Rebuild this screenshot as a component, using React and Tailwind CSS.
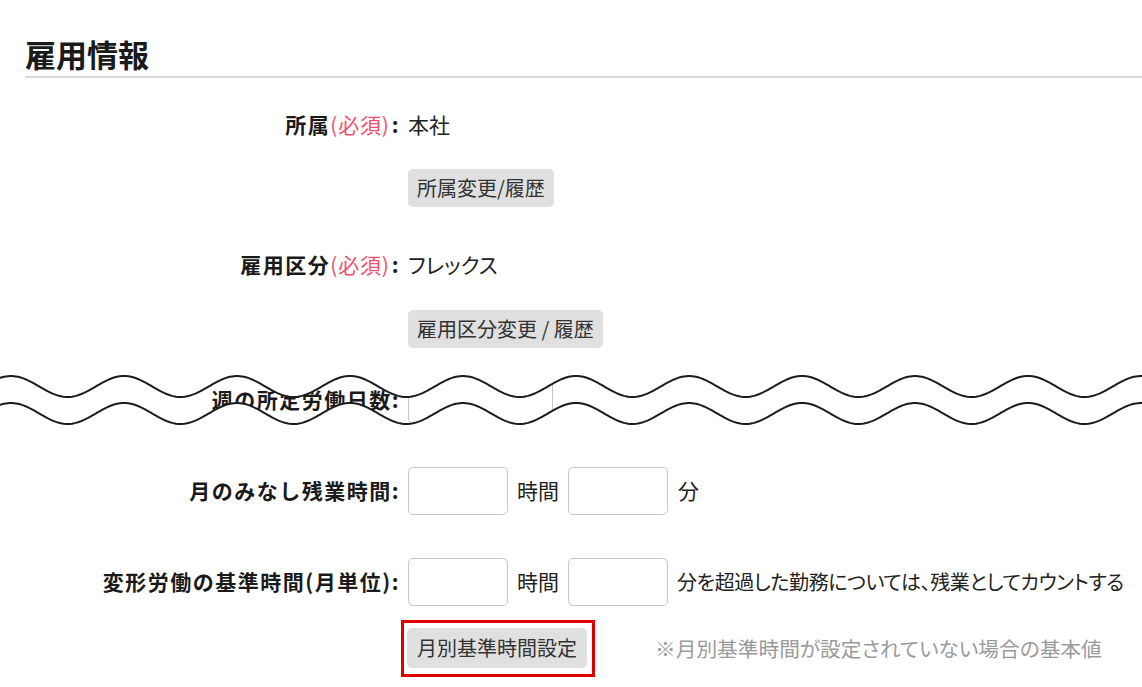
import React from 'react'

function wavePath(mid, amp, period, phase, width) {
    let d = ''
    for (let x = -2; x <= width + 2; x += 2) {
        const y = mid - amp * Math.cos((2 * Math.PI * (x - phase)) / period)
        d += (x === -2 ? 'M' : 'L') + x + ' ' + y.toFixed(2) + ' '
    }
    return d
}

function CutMark() {
    const w = 1142
    const h = 74
    const top = wavePath(24.5, 10.5, 113, 11, w)
    const bottom = wavePath(51.5, 10.5, 113, 11, w)
    return (
        <svg className="absolute left-0 top-[-13px] pointer-events-none" width={w} height={h} viewBox={`0 0 ${w} ${h}`}>
            <path d={`${top} L${w + 2} 0 L-2 0 Z`} fill="#fff" />
            <path d={`${bottom} L${w + 2} ${h} L-2 ${h} Z`} fill="#fff" />
            <path d={top} fill="none" stroke="#1c1c1c" strokeWidth="2" />
            <path d={bottom} fill="none" stroke="#1c1c1c" strokeWidth="2" />
        </svg>
    )
}

function Row({ label, required, className = '', children }) {
    return (
        <div className={`flex items-center ${className}`}>
            <div className="w-[400px] shrink-0 text-right text-[21px] font-bold text-[#1a1a1a] whitespace-nowrap tracking-[1.5px] [font-feature-settings:normal]">
                {label}
                {required && <span className="font-normal text-[#f0506e] tracking-[0.8px]">(必須)</span>}
                {required ? <span className="ml-[2px]">:</span> : ':'}
            </div>
            <div className="ml-[8px] flex items-center text-[21px] text-[#222] whitespace-nowrap">{children}</div>
        </div>
    )
}

function GrayButton({ children, className = '' }) {
    return (
        <button className={`h-[38px] px-[9px] rounded-[5px] bg-[#e0e0e0] text-[20px] text-[#333] whitespace-nowrap ${className}`}>
            {children}
        </button>
    )
}

function Box({ w = 'w-[100px]' }) {
    return <input type="text" className={`${w} h-[48px] border border-[#c8c8c8] rounded-[5px] bg-white outline-none`} />
}

export default function App() {
    return (
        <div className="w-[1142px] h-[687px] bg-white overflow-hidden relative font-['Noto_Sans_CJK_JP','Noto_Sans',sans-serif] [font-feature-settings:'palt']">
            <div className="ml-[25px] pt-[34px] pb-[2px] border-b-2 border-[#d9d9d9]">
                <h1 className="text-[31px] leading-[40px] font-bold text-[#1a1a1a]">雇用情報</h1>
            </div>

            <Row label="所属" required className="mt-[27px] h-[40px]">本社</Row>
            <div className="pl-[408px] mt-[24px]">
                <GrayButton>所属変更/履歴</GrayButton>
            </div>

            <Row label="雇用区分" required className="mt-[38px] h-[40px]">フレックス</Row>
            <div className="pl-[408px] mt-[25px]">
                <GrayButton>雇用区分変更 / 履歴</GrayButton>
            </div>

            <div className="relative mt-[27px]">
                <Row label="週の所定労働日数" className="h-[49px]">
                    <Box w="w-[145px]" />
                </Row>
                <CutMark />
            </div>

            <Row label="月のみなし残業時間" className="mt-[43px] h-[48px]">
                <Box />
                <span className="ml-[9px]">時間</span>
                <span className="ml-[9px]"><Box /></span>
                <span className="ml-[10px]">分</span>
            </Row>

            <Row label="変形労働の基準時間(月単位)" className="mt-[43px] h-[48px]">
                <Box />
                <span className="ml-[9px]">時間</span>
                <span className="ml-[9px]"><Box /></span>
                <span className="ml-[9px] text-[20px] tracking-[-0.4px]">分を超過した勤務については、残業としてカウントする</span>
            </Row>

            <div className="flex items-center mt-[14px] pl-[401px]">
                <div className="border-[3px] border-[#e00000] pl-[3px] pr-[5px] pt-[5px] pb-[6px]">
                    <GrayButton className="h-[40px] px-[10px]">月別基準時間設定</GrayButton>
                </div>
                <span className="ml-[60px] text-[20.7px] text-[#9a9a9a] whitespace-nowrap">※月別基準時間が設定されていない場合の基本値</span>
            </div>
        </div>
    )
}
